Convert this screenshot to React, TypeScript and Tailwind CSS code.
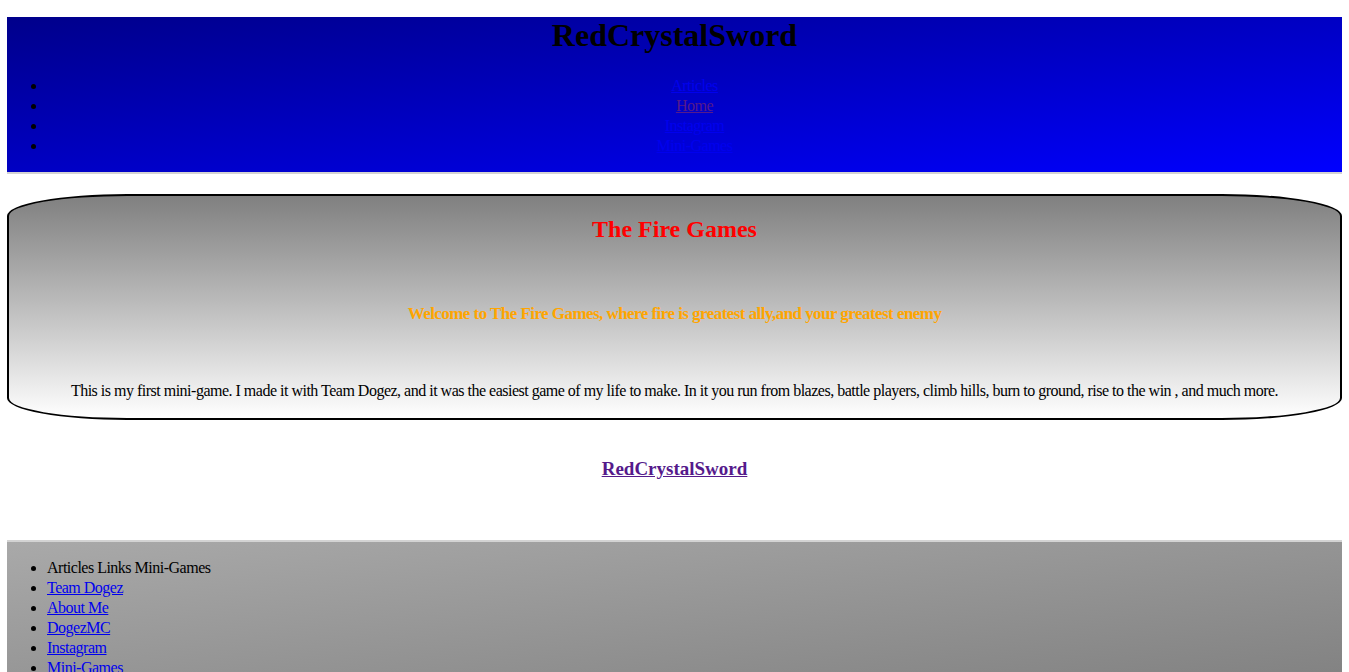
import React from 'react';

const serif = { fontFamily: '"Liberation Serif", "Times New Roman", serif' };

const headerLinks = [
  { label: 'Articles', visited: false },
  { label: 'Home', visited: true },
  { label: 'Instagram', visited: false },
  { label: 'Mini-Games', visited: false },
];

const footerLinks = ['Team Dogez', 'About Me', 'DogezMC', 'Instagram', 'Mini-Games'];

const App: React.FC = () => {
  return (
    <div className="min-h-screen bg-white text-black pt-[17px] px-[7px]" style={serif}>
      {/* Header */}
      <header className="bg-gradient-to-br from-[#00008b] to-[#0000ff] border-b-2 border-[#d3d3d3] pb-[16px]">
        <h1 className="text-center text-[32px] font-bold leading-[37px]">RedCrystalSword</h1>
        <ul className="mt-[22px] list-disc pl-[40px] text-[16px] leading-[20px] tracking-[-0.5px]">
          {headerLinks.map((l) => (
            <li key={l.label} className="text-center">
              <a href="#" className={`underline ${l.visited ? 'text-[#551a8b]' : 'text-[#0000ee]'}`}>
                {l.label}
              </a>
            </li>
          ))}
        </ul>
      </header>

      {/* Game card */}
      <section className="mt-[20px] border-2 border-black rounded-[120px/22px] bg-gradient-to-b from-[#808080] to-[#ffffff] text-center pt-[20px] pb-[18px]">
        <h2 className="text-[24px] font-bold leading-[27px] text-[#ff0000]">The Fire Games</h2>
        <h3 className="mt-[61px] text-[17px] font-bold leading-[20px] tracking-[-0.55px] text-[#ffa500]">
          Welcome to The Fire Games, where fire is greatest ally,and your greatest enemy
        </h3>
        <p className="mt-[58px] text-[16px] leading-[18px] tracking-[-0.5px]">
          This is my first mini-game. I made it with Team Dogez, and it was the easiest game of my life to make. In it you run from blazes, battle players, climb hills, burn to ground, rise to the win , and much more.
        </p>
      </section>

      {/* Author link */}
      <div className="text-center mt-[38px] mb-[58px]">
        <a href="#" className="text-[19px] font-bold leading-[22px] underline text-[#551a8b]">
          RedCrystalSword
        </a>
      </div>

      {/* Footer */}
      <footer className="bg-gradient-to-br from-[#a9a9a9] to-[#808080] border-t-2 border-[#d3d3d3] pt-[16px] pb-[16px]">
        <ul className="list-disc pl-[40px] text-[16px] leading-[20px] tracking-[-0.5px]">
          <li>Articles Links Mini-Games</li>
          {footerLinks.map((l) => (
            <li key={l}>
              <a href="#" className="underline text-[#0000ee]">{l}</a>
            </li>
          ))}
        </ul>
      </footer>
    </div>
  );
};

export default App;
